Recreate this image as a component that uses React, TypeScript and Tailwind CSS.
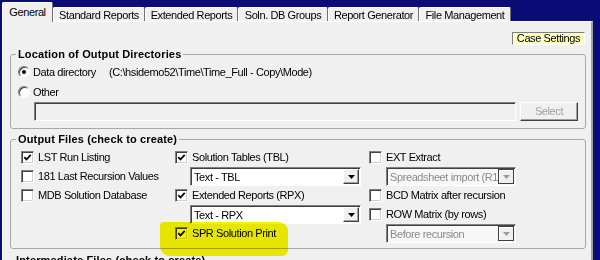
import clsx from "clsx";

const Check = ({ checked }: { checked?: boolean }) => (
  <span className="flex h-[13px] w-[13px] shrink-0 items-center justify-center border border-t-[#808080] border-l-[#808080] border-b-white border-r-white bg-white shadow-[inset_1px_1px_0_#404040,inset_-1px_-1px_0_#d4d0c8]">
    {checked && (
      <svg width="9" height="9" viewBox="0 0 9 9">
        <path d="M1.3 4.1 L3.5 6.5 L7.7 1.9" fill="none" stroke="#000" strokeWidth="1.8" />
      </svg>
    )}
  </span>
);

const Radio = ({ on }: { on?: boolean }) => (
  <span className="flex h-[12px] w-[12px] shrink-0 items-center justify-center rounded-full border border-t-[#808080] border-l-[#808080] border-b-[#fafafa] border-r-[#fafafa] bg-white shadow-[inset_1px_1px_0_#404040]">
    {on && <span className="h-[4px] w-[4px] rounded-full bg-black" />}
  </span>
);

const CheckRow = ({ label, checked }: { label: string; checked?: boolean }) => (
  <div className="flex items-center gap-[4px]">
    <Check checked={checked} />
    <span className="whitespace-nowrap">{label}</span>
  </div>
);

const Drop = ({
  value,
  className,
  disabled,
}: {
  value: string;
  className: string;
  disabled?: boolean;
}) => (
  <div
    className={clsx(
      "flex h-[19px] items-stretch overflow-hidden border border-t-[#808080] border-l-[#808080] border-b-white border-r-white shadow-[inset_1px_1px_0_#404040]",
      disabled ? "bg-[#f7f7f7] text-[#8a8a8a]" : "bg-white",
      className
    )}
  >
    <span className="flex-1 overflow-hidden whitespace-nowrap pl-[3px] pt-[2px] leading-[14px]">{value}</span>
    <span
      className={clsx(
        "mb-[1px] mr-[1px] mt-[1px] flex w-[16px] items-center justify-center bg-[#f0f0f0]",
        disabled
          ? "border border-[#404040] shadow-[inset_1px_1px_0_#fff]"
          : "border border-t-white border-l-white border-b-[#404040] border-r-[#404040] shadow-[inset_-1px_-1px_0_#a0a0a0]"
      )}
    >
      <svg width="7" height="4" viewBox="0 0 7 4">
        <path d="M0 0 H7 L3.5 4 Z" fill={disabled ? "#9a9a9a" : "#000"} />
      </svg>
    </span>
  </div>
);

const tabs = [
  { label: "Standard Reports", w: "w-[92px]" },
  { label: "Extended Reports", w: "w-[93px]" },
  { label: "Soln. DB Groups", w: "w-[90px]" },
  { label: "Report Generator", w: "w-[91px]" },
  { label: "File Management", w: "w-[92px]" },
];

const legend = "ml-[5px] px-[2px] text-[11px] font-bold leading-[12px] tracking-[0.15px]";

export default function App() {
  return (
    <div className="h-[260px] w-[600px] overflow-hidden bg-[#0c0c78] font-['Liberation_Sans',Arial,sans-serif] text-[11px] leading-[13px] tracking-[-0.4px] text-black">
      <div className="flex h-[21px] items-end pl-[2px]">
        <div className="relative z-10 -mb-px flex h-[20px] w-[51px] items-center justify-center rounded-t-[2px] border-l border-t border-r border-l-white border-t-white border-r-[#707070] bg-[#f0f0f0] pb-[1px]">
          General
        </div>
        {tabs.map((t) => (
          <div
            key={t.label}
            className={clsx(
              "flex h-[14px] items-center justify-center rounded-t-[2px] border-l border-t border-r border-l-white border-t-white border-r-[#707070] bg-[#f0f0f0] pt-[1px] whitespace-nowrap",
              t.w
            )}
          >
            {t.label}
          </div>
        ))}
      </div>

      <div className="relative ml-[2px] h-[239px] w-[591px] border-l border-t border-r-2 border-l-white border-t-white border-r-[#a0a0a0] bg-[#f0f0f0]">
        <div className="mt-[10px] flex justify-end pr-[6px]">
          <div className="flex h-[13px] w-[73px] items-center justify-center border border-t-[#808080] border-l-[#808080] border-b-white border-r-white bg-[#ffffc0] leading-[11px]">
            Case Settings
          </div>
        </div>

        <fieldset className="ml-[7px] mt-[3px] w-[576px] rounded-[3px] border border-[#a8a8a8] pb-[7px]">
          <legend className={legend}>Location of Output Directories</legend>
          <div className="mt-[2px] flex h-[20px] items-center pl-[7px]">
            <Radio on />
            <span className="ml-[3px] w-[76px] whitespace-nowrap">Data directory</span>
            <span className="whitespace-nowrap">(C:\hsidemo52\Time\Time_Full - Copy\Mode)</span>
          </div>
          <div className="flex h-[20px] items-center pl-[7px]">
            <Radio />
            <span className="ml-[3px]">Other</span>
          </div>
          <div className="flex h-[19px] items-stretch pl-[23px]">
            <div className="w-[482px] border border-t-[#808080] border-l-[#808080] border-b-white border-r-white bg-[#f0f0f0] shadow-[inset_1px_1px_0_#404040]" />
            <div className="ml-[4px] flex w-[58px] items-center justify-center border border-t-white border-l-white border-b-[#404040] border-r-[#404040] bg-[#f0f0f0] text-[#a0a0a0] shadow-[inset_-1px_-1px_0_#a0a0a0]">
              Select
            </div>
          </div>
        </fieldset>

        <fieldset className="ml-[7px] mt-[4px] w-[576px] rounded-[3px] border border-[#a8a8a8] pb-[5px]">
          <legend className={legend}>Output Files (check to create)</legend>
          <div className="mt-[3px] grid grid-cols-[154px_194px_1fr] grid-rows-[repeat(5,19px)] items-center pl-[10px]">
            <CheckRow label="LST Run Listing" checked />
            <CheckRow label="Solution Tables (TBL)" checked />
            <CheckRow label="EXT Extract" />

            <CheckRow label="181 Last Recursion Values" />
            <Drop value="Text - TBL" className="ml-[15px] w-[171px]" />
            <Drop value="Spreadsheet import (R1" className="ml-[17px] w-[130px]" disabled />

            <CheckRow label="MDB Solution Database" />
            <CheckRow label="Extended Reports (RPX)" checked />
            <CheckRow label="BCD Matrix after recursion" />

            <div />
            <Drop value="Text - RPX" className="ml-[15px] w-[171px]" />
            <CheckRow label="ROW Matrix (by rows)" />

            <div />
            <CheckRow label="SPR Solution Print" checked />
            <Drop value="Before recursion" className="ml-[17px] w-[130px]" disabled />
          </div>
        </fieldset>

        <fieldset className="ml-[7px] mt-[5px] h-[40px] w-[576px] rounded-[3px] border border-[#a8a8a8]">
          <legend className="ml-[3px] px-[2px] text-[11px] font-bold leading-[12px] tracking-[0.15px]">
            Intermediate Files (check to create)
          </legend>
        </fieldset>

        <div className="pointer-events-none absolute left-[157px] top-[200px] h-[34px] w-[128px] rounded-[4px_9px_6px_10px] bg-[#f4f400] mix-blend-multiply" />
      </div>
    </div>
  );
}
